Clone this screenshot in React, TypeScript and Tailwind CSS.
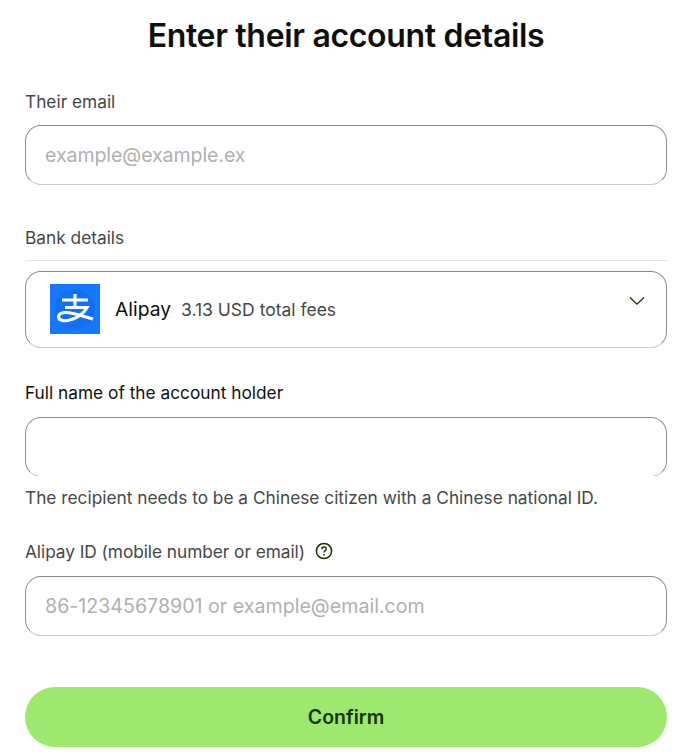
import React from "react";

const font = { fontFamily: "Inter, 'Liberation Sans', sans-serif" };

function Field({ placeholder, className = "", open = false }: { placeholder?: string; className?: string; open?: boolean }) {
  return (
    <div
      className={`relative h-[60px] w-full rounded-[16px] border border-t-[#868685] border-l-[#8f8f8e] border-r-[#8f8f8e] border-b-[#c9c9c7] pl-[19px] pt-[2px] flex items-center text-[19.6px] text-[#b0b0ae] ${className}`}
    >
      {placeholder}
      {open && <span className="absolute left-[9px] right-[10px] -bottom-px h-px bg-white" />}
    </div>
  );
}

export default function App() {
  return (
    <div style={font} className="w-[692px] h-[756px] bg-white overflow-hidden px-[25px] pt-[12px]">
      <h1 className="text-center text-[32px] leading-[48px] font-semibold text-[#0e0f0c] tracking-[-0.32px]">
        Enter their account details
      </h1>
      <div className="mt-[30px] h-[24px] leading-[24px] text-[17.3px] text-[#454745]">Their email</div>
      <Field placeholder="example@example.ex" className="mt-[11px] tracking-[-0.1px]" />

      <div className="mt-[41px] h-[24px] leading-[24px] text-[17.3px] text-[#454745]">Bank details</div>
      <div className="mt-[10px] h-px bg-[#e4e4e2]" />
      <div className="mt-[10px] h-[77px] rounded-[16px] border border-t-[#868685] border-l-[#8f8f8e] border-r-[#8f8f8e] border-b-[#c9c9c7] pl-[24px] pr-[20px] pb-[1px] flex items-center">
        <svg width="50" height="50" viewBox="0 0 50 50" className="shrink-0">
          <rect width="50" height="50" fill="#1677ff" />
          <circle cx="25" cy="25" r="20" fill="#1170f5" />
          <path
            d="M12 16H38M25 10V23.5M15 23.5H37C34 29 27 35 18 36.5C12 37.5 8.5 35.5 8.5 33C8.5 30 12 28.5 16 28.5C23 28.5 32 32 43 35"
            fill="none"
            stroke="#fff"
            strokeWidth="3.2"
          />
        </svg>
        <span className="ml-[15px] text-[19.3px] text-[#0e0f0c]">Alipay</span>
        <span className="ml-[10px] mt-[2px] text-[17.5px] text-[#454745]">3.13 USD total fees</span>
        <svg width="16" height="10" viewBox="0 0 16 10" className="ml-auto -mt-[16px] mr-[1px]">
          <path d="M1 1.5L8 8.2L15 1.5" fill="none" stroke="#163300" strokeWidth="1.3" />
        </svg>
      </div>

      <div className="mt-[33px] h-[24px] leading-[24px] text-[17.3px] text-[#0e0f0c]">Full name of the account holder</div>
      <Field className="mt-[12px]" open />
      <div className="mt-[9px] h-[24px] leading-[24px] text-[17.3px] text-[#454745]">
        The recipient needs to be a Chinese citizen with a Chinese national ID.
      </div>

      <div className="mt-[30px] h-[24px] leading-[24px] text-[17.3px] tracking-[-0.05px] text-[#454745] flex items-center">
        Alipay ID (mobile number or email)
        <svg width="18" height="18" viewBox="0 0 18 18" className="ml-[10px] -mt-[2px]">
          <circle cx="9" cy="9" r="7.6" fill="none" stroke="#163300" strokeWidth="1.5" />
          <path d="M6.7 7.2C6.7 5.9 7.7 5 9 5C10.3 5 11.3 5.9 11.3 7C11.3 8.6 9 8.6 9 10.6" fill="none" stroke="#163300" strokeWidth="1.4" />
          <circle cx="9" cy="12.8" r="0.9" fill="#163300" />
        </svg>
      </div>
      <Field placeholder="86-12345678901 or example@email.com" className="mt-[12px] tracking-[0.01px]" />

      <button className="mt-[51px] pt-[2px] w-full h-[60px] rounded-[30px] bg-[#9fe870] text-[19.5px] font-semibold text-[#163300]">
        Confirm
      </button>
    </div>
  );
}
